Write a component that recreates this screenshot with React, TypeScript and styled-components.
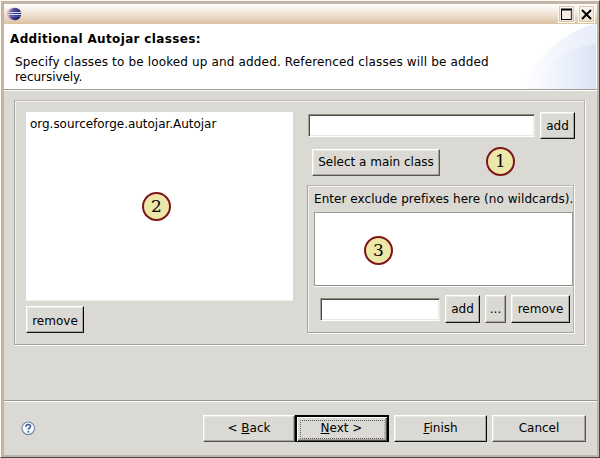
import React from "react";
import styled, { createGlobalStyle, css } from "styled-components";

const GlobalStyle = createGlobalStyle`
  * { box-sizing: border-box; }
  body { margin: 0; overflow: hidden; background: #dad9d4; }
`;

const Window = styled.div`
  width: 600px;
  height: 458px;
  display: flex;
  flex-direction: column;
  position: relative;
  padding: 3px 2px 2px 3px;
  border-style: solid;
  border-width: 1px;
  border-color: #fff9ec #484440 #484440 #fff9ec;
  background: #c1b5aa;
  color: #000;
  font: 12px/15px "DejaVu Sans", sans-serif;
  white-space: nowrap;
`;

const TitleBar = styled.div`
  height: 20px;
  flex: none;
  display: flex;
  align-items: center;
  gap: 3px;
  padding: 0 2px 0 3px;
  background: linear-gradient(#fffefc, #f2e7db 45%, #dcc2a2);
`;

const Spacer = styled.div`
  flex: 1;
`;

const TitleButton = styled.div`
  width: 17px;
  height: 18px;
  display: grid;
  place-items: center;
  border: 1px solid #fffaf2;
  box-shadow: inset 0 0 0 1px #dfc5a6;
  background: linear-gradient(#fdfaf6, #ecdfd0);
`;

const Header = styled.header`
  height: 67px;
  flex: none;
  display: flex;
  position: relative;
  border-bottom: 1px solid #fff;
  box-shadow: inset 0 -1px 0 #9b9992;
  background: #fff;
`;

const Swoosh = styled.svg`
  position: absolute;
  right: 1px;
  top: 0;
`;

const HeaderText = styled.div`
  position: relative;
  padding: 8px 0 0 6px;
`;

const Title = styled.div<{ $spacing?: number }>`
  font-weight: bold;
  letter-spacing: ${(p) => p.$spacing ?? 0}px;
`;

const Description = styled.div`
  margin: 8px 0 0 5px;
  line-height: 14.5px;
`;

const Text = styled.span<{ $spacing?: number }>`
  letter-spacing: ${(p) => p.$spacing ?? 0}px;
`;

const Body = styled.main`
  height: 309px;
  flex: none;
  display: flex;
  padding: 9px 10px 0 10px;
  background: #dad9d4;
`;

const etched = css`
  border: 1px solid #a5a39c;
  border-top-color: #bbb9b2;
  border-right-color: #b3b1aa;
  box-shadow: 1px 1px 0 #fcfcfa, inset 1px 1px 0 #f3f2ef;
`;

const Group = styled.section`
  ${etched}
  width: 571px;
  height: 245px;
  display: flex;
  padding: 11px;
`;

const LeftColumn = styled.div`
  width: 267px;
  display: flex;
  flex-direction: column;
  align-items: flex-start;
  gap: 5px;
`;

const ClassList = styled.div`
  width: 267px;
  height: 190px;
  padding: 5px 4px;
  border-bottom: 1px solid #f1f0ee;
  background: #fff;
`;

const RightColumn = styled.div`
  width: 268px;
  margin-left: 14px;
  display: flex;
  flex-direction: column;
`;

const Row = styled.div<{ $gap?: number; $inset?: string }>`
  display: flex;
  align-items: center;
  gap: ${(p) => p.$gap ?? 5}px;
  padding: ${(p) => p.$inset ?? "0"};
`;

const Field = styled.div<{ $width: number }>`
  width: ${(p) => p.$width}px;
  height: 23px;
  flex: none;
  border: 1px solid;
  border-color: #8b8a84 #ecebe8 #fff #a5a39c;
  box-shadow: inset 1px 1px 0 #4a4944, inset -1px -1px 0 #eae9e5;
  background: #fff;
`;

const Button = styled.button<{ $width: number; $height?: number; $soft?: boolean; $drop?: number }>`
  width: ${(p) => p.$width}px;
  height: ${(p) => p.$height ?? 27}px;
  flex: none;
  padding: ${(p) => p.$drop ?? 0}px 0 0;
  margin: 0;
  border: 1px solid;
  border-color: #fff ${(p) => (p.$soft ? "#55544e #55544e" : "#080808 #161614")} #fff;
  border-radius: 0;
  box-shadow: inset -1px -1px 0 #a7a59d, inset 1px 1px 0 #e9e8e4;
  background: #dad9d4;
  color: #000;
  font: inherit;
  white-space: nowrap;
`;

const DefaultButton = styled(Button)`
  border: 2px solid #000;
  border-bottom-width: 1px;
  box-shadow: inset 1px 1px 0 #fff, inset -1px -1px 0 #4f4e49, inset -2px -2px 0 #a6a49c;
  padding: 2px;
`;

const FocusRing = styled.span`
  display: grid;
  place-items: center;
  height: 19px;
  margin: 0 0 0 1px;
  padding: 0 2px 2px 0;
  border: 1px dotted #55544f;
  border-right-color: #a19f97;
  border-left-color: #66645e;
`;

const ExcludeGroup = styled.section`
  ${etched}
  width: 267px;
  height: 148px;
  margin: 9px 0 0 0;
  padding: 6px 0 0 6px;
`;

const TextArea = styled.div`
  width: 259px;
  height: 74px;
  margin: 5px 0 9px 0;
  border: 1px solid #9d9b94;
  border-bottom-color: #8e8c85;
  box-shadow: 0 1px 0 #fff;
  background: #fff;
`;

const Footer = styled.footer`
  height: 54px;
  flex: none;
  display: flex;
  align-items: flex-start;
  padding: 13px 11px 0 17px;
  border-top: 1px solid #fff;
  background: #dad9d4;
`;

const HelpIcon = styled.svg`
  margin-top: 6px;
`;

const Badge = styled.div<{ $x: number; $y: number }>`
  position: absolute;
  left: ${(p) => p.$x}px;
  top: ${(p) => p.$y}px;
  width: 29px;
  height: 29px;
  display: grid;
  place-items: center;
  border: 2px solid #7d1519;
  border-radius: 50%;
  background: #eee7aa;
  font: 17px/25px "DejaVu Serif", serif;
`;

const Separator = styled.div`
  height: 1px;
  flex: none;
  background: #96948c;
`;

function EclipseLogo() {
  return (
    <svg width="15" height="14" viewBox="0 0 15 14">
      <defs>
        <linearGradient id="orb" x1="0" x2="1" y1="0" y2=".5">
          <stop offset="0" stopColor="#9a8fc8" />
          <stop offset=".45" stopColor="#4d4ba0" />
          <stop offset="1" stopColor="#151c62" />
        </linearGradient>
      </defs>
      <circle cx="6.3" cy="7" r="6.2" fill="#dfacc0" />
      <circle cx="8" cy="7" r="6.2" fill="url(#orb)" />
      <path d="M1.7 5.5H14M1.5 7.5H14.2" stroke="#d5def5" strokeWidth="1" />
      <path d="M2 9.2H13.8" stroke="#7b86c9" strokeWidth=".7" />
    </svg>
  );
}

function HeaderSwoosh() {
  return (
    <Swoosh width="76" height="65" viewBox="0 0 76 65">
      <defs>
        <linearGradient id="outer" x1="0" x2="1">
          <stop offset="0" stopColor="#fff" />
          <stop offset="1" stopColor="#e7edfa" />
        </linearGradient>
        <linearGradient id="inner" x1="0" x2="1">
          <stop offset="0" stopColor="#f7f9fe" stopOpacity="0" />
          <stop offset="1" stopColor="#d9e1f5" />
        </linearGradient>
      </defs>
      <path d="M0 65C16 35 42 7 76 0V65Z" fill="url(#outer)" />
      <path d="M10 65C25 38 48 24 76 20V65Z" fill="url(#inner)" />
    </Swoosh>
  );
}

export default function App() {
  return (
    <>
      <GlobalStyle />
      <Window>
        <TitleBar>
          <EclipseLogo />
          <Spacer />
          <TitleButton>
            <svg width="13" height="13" viewBox="0 0 13 13">
              <path d="M1 1H12V12H1Z" fill="#f4ece3" />
              <path d="M1.5 12V1M1 11.5H12" stroke="#000" />
              <path d="M1 1.5H12" stroke="#000" strokeWidth="2" />
              <path d="M11.5 2V12" stroke="#444" strokeWidth="1.3" />
            </svg>
          </TitleButton>
          <TitleButton>
            <svg width="13" height="13" viewBox="0 0 13 13">
              <path d="M2 2L11 11M11 2L2 11" stroke="#000" strokeWidth="2" />
            </svg>
          </TitleButton>
        </TitleBar>

        <Header>
          <HeaderSwoosh />
          <HeaderText>
            <Title $spacing={0.35}>Additional Autojar classes:</Title>
            <Description>
              <Text $spacing={0.15}>Specify classes to be looked up and added. Referenced classes will be added</Text>
              <br />
              <Text $spacing={-0.05}>recursively.</Text>
            </Description>
          </HeaderText>
        </Header>

        <Body>
          <Group>
            <LeftColumn>
              <ClassList>
                <Text $spacing={-0.03}>org.sourceforge.autojar.Autojar</Text>
              </ClassList>
              <Button $width={58} $drop={3}>remove</Button>
            </LeftColumn>
            <RightColumn>
              <Row $inset="0 0 0 1px">
                <Field $width={227} />
                <Button $width={35} $drop={1}>add</Button>
              </Row>
              <Row $inset="10px 0 0 5px">
                <Button $width={128} $soft>
                  <Text>Select a main class</Text>
                </Button>
              </Row>
              <ExcludeGroup>
                <Text $spacing={0.05}>Enter exclude prefixes here (no wildcards).</Text>
                <TextArea />
                <Row $inset="0 0 0 6px">
                  <Field $width={120} />
                  <Button $width={35} $height={28}>add</Button>
                  <Button $width={21} $height={28} $soft>...</Button>
                  <Button $width={59} $height={28}>remove</Button>
                </Row>
              </ExcludeGroup>
            </RightColumn>
          </Group>
        </Body>
        <Separator />

        <Footer>
          <HelpIcon width="15" height="15" viewBox="0 0 15 15">
            <circle cx="7.2" cy="7.3" r="6.3" fill="#f7faff" stroke="#7187a7" strokeWidth="1.1" />
            <path d="M5 5.7C5 2.7 9.7 2.8 9.5 5.4C9.4 6.8 7.4 7 7.3 8.8" fill="none" stroke="#405987" strokeWidth="1.6" />
            <path d="M6.4 10H8.2V11.6H6.4Z" fill="#405987" />
          </HelpIcon>
          <Spacer />
          <Row $gap={0}>
            <Button $width={92} $soft>
              &lt; <u>B</u>ack
            </Button>
            <DefaultButton $width={94}>
              <FocusRing>
                <span><u>N</u>ext &gt;</span>
              </FocusRing>
            </DefaultButton>
          </Row>
          <Row $inset="0 0 0 5px">
            <Button $width={93}>
              <u>F</u>inish
            </Button>
            <Button $width={94} $soft>Cancel</Button>
          </Row>
        </Footer>
        <Badge $x={485} $y={146}>1</Badge>
        <Badge $x={141} $y={191}>2</Badge>
        <Badge $x={363} $y={235}>3</Badge>
      </Window>
    </>
  );
}
